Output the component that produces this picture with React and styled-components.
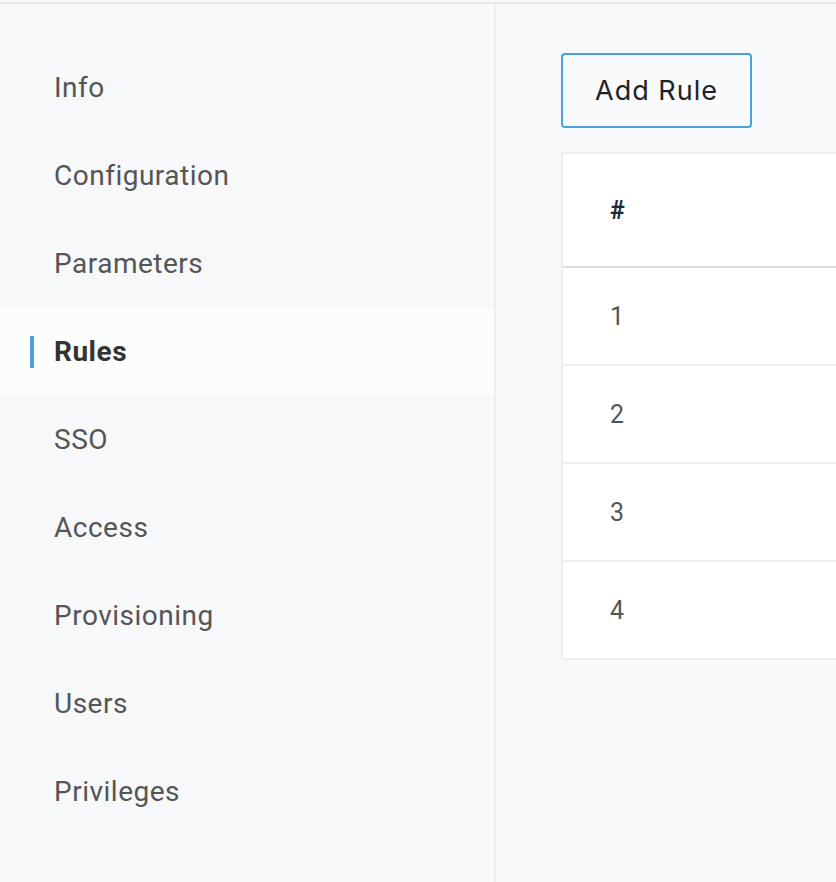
import React from "react";
import styled, { createGlobalStyle } from "styled-components";

const GlobalStyle = createGlobalStyle`
  html, body {
    margin: 0;
    padding: 0;
    background: #f7f8fa;
  }
  body {
    font-family: Roboto, "Noto Sans", sans-serif;
  }
`

const navItems = ["Info", "Configuration", "Parameters", "Rules", "SSO", "Access", "Provisioning", "Users", "Privileges"]
const rules = [1, 2, 3, 4]

const App = () => {
    return (
        <>
            <GlobalStyle />
            <Page>
                <Sidebar>
                    {navItems.map((item) => (
                        <NavItem key={item} active={item === "Rules"}>{item}</NavItem>
                    ))}
                </Sidebar>
                <Content>
                    <AddButton>Add Rule</AddButton>
                    <Table>
                        <HeadRow>
                            <HeadCell>#</HeadCell>
                        </HeadRow>
                        {rules.map((n) => (
                            <Row key={n}>
                                <Cell>{n}</Cell>
                            </Row>
                        ))}
                    </Table>
                </Content>
            </Page>
        </>
    )
}

export default App

const Page = styled.div`
  display: flex;
  height: 882px;
  box-sizing: border-box;
  border-top: 2px solid #e6e7e9;
  margin-top: 2px;
  overflow: hidden;
`

const Sidebar = styled.nav`
  width: 494px;
  flex-shrink: 0;
  border-right: 2px solid #eceef0;
  padding-top: 39px;
  box-sizing: content-box;
`

const NavItem = styled.div`
  position: relative;
  height: 88px;
  display: flex;
  align-items: center;
  padding-left: 54px;
  font-size: 28px;
  letter-spacing: 0.5px;
  color: ${(p) => (p.active ? "#333" : "#555")};
  font-weight: ${(p) => (p.active ? 700 : 400)};
  background: ${(p) => (p.active ? "#fbfcfc" : "transparent")};

  &::before {
    content: "";
    display: ${(p) => (p.active ? "block" : "none")};
    position: absolute;
    left: 30px;
    top: 29px;
    width: 4px;
    height: 32px;
    background: #4aa3df;
  }
`

const Content = styled.main`
  flex: 1;
  padding: 49px 0 0 65px;
  display: flex;
  flex-direction: column;
  align-items: flex-start;
`

const AddButton = styled.button`
  width: 191px;
  height: 75px;
  border: 2px solid #4aa3df;
  border-radius: 4px;
  background: #f9fafb;
  font-family: Inter, "Liberation Sans", sans-serif;
  font-size: 27px;
  letter-spacing: 1px;
  color: #1f2328;
  padding: 0;
`

const Table = styled.div`
  margin-top: 24px;
  width: 100%;
  background: #fff;
  border: 2px solid #eeeff1;
  border-right: none;
`

const HeadRow = styled.div`
  height: 112px;
  display: flex;
  align-items: center;
  border-bottom: 2px solid #dcdddf;
`

const HeadCell = styled.div`
  padding-left: 47px;
  font-size: 25px;
  font-weight: 700;
  color: #1c2b3a;
`

const Row = styled.div`
  height: 96px;
  display: flex;
  align-items: center;
  border-bottom: 2px solid #eeeff1;

  &:last-child {
    border-bottom: none;
  }
`

const Cell = styled.div`
  padding-left: 47px;
  font-size: 25px;
  color: #555;
`
